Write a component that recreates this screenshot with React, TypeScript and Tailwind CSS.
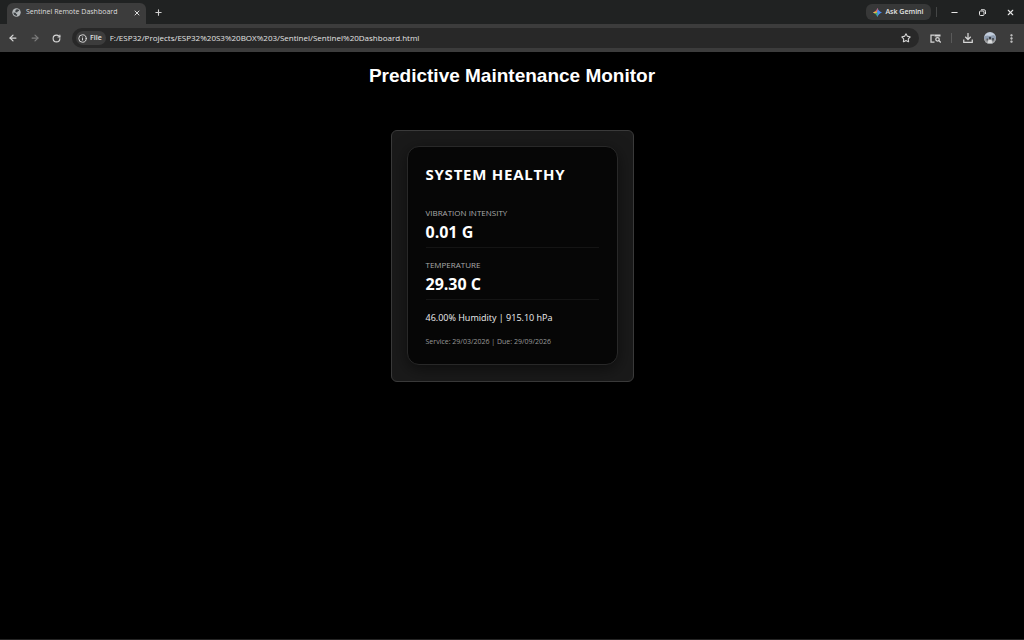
import React from "react";
import { ArrowLeft, ArrowRight, EllipsisVertical, Info, Minus, Plus, RotateCw, Star, X } from "lucide-react";

const readings = [
  { label: "VIBRATION INTENSITY", value: "0.01 G" },
  { label: "TEMPERATURE", value: "29.30 C" },
];

const GlobeIcon = () => (
  <svg viewBox="0 0 16 16" className="w-[9px] h-[9px] shrink-0" aria-hidden="true">
    <circle cx="8" cy="8" r="7.5" fill="#b4b8ba" />
    <path d="M2.500 8l4 .5 1 2 2 1-1 2.500C5 14 2 11.500 2.500 8zM7 2.500l4-.5 2 3-3 1-1 2-3-1 0-2z" fill="#3c4043" />
  </svg>
);

const GeminiIcon = () => (
  <svg viewBox="0 0 16 16" className="w-[9px] h-[9px] shrink-0" aria-hidden="true">
    <defs>
      <clipPath id="spark">
        <path d="M8 0c1.200 4 4 6.800 8 8-4 1.200-6.800 4-8 8-1.200-4-4-6.800-8-8 4-1.200 6.800-4 8-8z" />
      </clipPath>
    </defs>
    <g clipPath="url(#spark)">
      <rect width="16" height="16" fill="#4a8bf5" />
      <path d="M0 0h9L7 7 3 8H0z" fill="#ea5548" />
      <path d="M0 7l7-1v4H0z" fill="#f3bd3c" />
      <path d="M3 9l5-1v8H3z" fill="#45a967" />
    </g>
  </svg>
);

const RestoreIcon = () => (
  <svg viewBox="0 0 14 14" className="w-[7px] h-[7px]" fill="none" stroke="currentColor" strokeWidth="2" aria-hidden="true">
    <rect x="1" y="4" width="9" height="9" rx="2" />
    <path d="M4 1.500h6a3 3 0 0 1 3 3V10" />
  </svg>
);

const SidePanelSearchIcon = () => (
  <svg viewBox="0 0 22 18" className="w-[11px] h-[9px]" fill="none" stroke="currentColor" strokeWidth="2.500" aria-hidden="true">
    <path d="M9 16H2V2h7" />
    <path d="M9 3h12" strokeWidth="4" />
    <circle cx="15" cy="10.500" r="3.500" />
    <path d="M17.500 13l4 4" />
  </svg>
);

const DownloadIcon = () => (
  <svg viewBox="0 0 20 20" className="w-2.5 h-2.5" fill="none" stroke="currentColor" strokeWidth="2.500" aria-hidden="true">
    <path d="M10 0v13M4.500 7.500L10 13l5.500-5.500M1.500 13v5.500h17V13" />
  </svg>
);

const Avatar = () => (
  <svg viewBox="0 0 24 24" className="w-3 h-3" aria-hidden="true">
    <defs>
      <clipPath id="avatar">
        <circle cx="12" cy="12" r="12" />
      </clipPath>
    </defs>
    <g clipPath="url(#avatar)">
      <rect width="24" height="24" fill="#c2cddc" />
      <path d="M0 9l6-2 6 1 7-2 5 3v5H0z" fill="#8f9db0" />
      <path d="M0 14h24v10H0z" fill="#9b9c9e" />
      <path d="M5 13h3v4H5zM16 12h4v5h-4z" fill="#50565e" />
      <circle cx="12" cy="12" r="2.500" fill="#3b4048" />
      <path d="M7 22l2-6h6l2 6z" fill="#dadbdc" />
    </g>
  </svg>
);

const TabStrip = () => (
  <div className="flex h-6 items-center bg-[#202222]">
    <div className="ml-[7px] flex h-[21px] w-[139px] items-center gap-[5px] self-end rounded-t-md bg-[#3c3c3c] px-[5px] pb-0.5 text-[#dedede]">
      <GlobeIcon />
      <span className="flex-1 whitespace-nowrap text-[7px]">Sentinel Remote Dashboard</span>
      <button aria-label="Close tab"><X size={8} strokeWidth={3} /></button>
    </div>
    <button aria-label="New tab" className="ml-2 text-[#d0d0d0]"><Plus size={9} strokeWidth={3} /></button>
    <div className="flex-1" />
    <button className="flex h-4 w-[65px] items-center justify-center gap-[3px] whitespace-nowrap rounded-md bg-[#373838] text-[7px] font-semibold text-[#e6e6e6]">
      <GeminiIcon />
      Ask Gemini
    </button>
    <span className="ml-[5px] h-2.5 w-px bg-[#444646]" />
    <div className="flex text-[#e6e6e6]">
      <button aria-label="Minimize" className="ml-[3px] grid w-7 place-items-center"><Minus size={9} strokeWidth={3} /></button>
      <button aria-label="Restore" className="grid w-7 place-items-center"><RestoreIcon /></button>
      <button aria-label="Close" className="grid w-7 place-items-center"><X size={9} strokeWidth={3} /></button>
    </div>
  </div>
);

const Toolbar = () => (
  <div className="flex h-7 items-center bg-[#3c3c3c] text-[#d6d6d6]">
    <div className="flex items-center gap-3 pl-2">
      <button aria-label="Back"><ArrowLeft size={10} strokeWidth={3} /></button>
      <button aria-label="Forward" className="text-[#7c7c7c]"><ArrowRight size={10} strokeWidth={3} /></button>
      <button aria-label="Reload"><RotateCw size={9} strokeWidth={3} /></button>
    </div>
    <div className="ml-[11px] flex h-5 flex-1 items-center rounded-full bg-[#282828] pl-1 pr-2">
      <button className="flex h-3.5 items-center gap-[3px] rounded-full bg-[#3c3c3c] pl-0.5 pr-1 text-[7px] font-semibold text-[#e0e0e0]">
        <Info size={9} strokeWidth={2.5} />
        File
      </button>
      <input
        aria-label="Address"
        className="ml-1 min-w-0 flex-1 bg-transparent pb-px text-[8px] text-[#e3e3e3] outline-none"
        defaultValue="F:/ESP32/Projects/ESP32%20S3%20BOX%203/Sentinel/Sentinel%20Dashboard.html"
      />
      <button aria-label="Bookmark"><Star size={10} strokeWidth={2.5} /></button>
    </div>
    <div className="flex items-center pl-[11px] pr-[7px]">
      <button aria-label="Search side panel"><SidePanelSearchIcon /></button>
      <span className="ml-2.5 h-2.5 w-px bg-[#5a5a5a]" />
      <button aria-label="Downloads" className="ml-[11px]"><DownloadIcon /></button>
      <button aria-label="Profile" className="ml-[11px]"><Avatar /></button>
      <button aria-label="Menu" className="ml-2.5"><EllipsisVertical size={11} strokeWidth={3} /></button>
    </div>
  </div>
);

const StatusCard = () => (
  <section className="w-[243px] rounded-md border border-[#3a3a3a] bg-[#1a1a1a] px-[15px] pt-[15px] pb-4">
    <div className="rounded-xl border border-[#282828] bg-[#060606] px-[18px] py-4 shadow-[0_4px_16px_rgba(0,0,0,0.5)]">
      <h2 className="whitespace-nowrap text-[15px] font-bold leading-[22px] tracking-wider">SYSTEM HEALTHY</h2>
      <dl className="mt-4">
        {readings.map((reading) => (
          <div key={reading.label} className="mb-[5px] border-b border-[#141414] py-1">
            <dt className="text-[8px] leading-4 text-[#aaa]">{reading.label}</dt>
            <dd className="text-[16px] font-bold leading-[22px]">{reading.value}</dd>
          </div>
        ))}
      </dl>
      <p className="mt-2.5 text-[9px] leading-4 text-[#eee]">46.00% Humidity | 915.10 hPa</p>
      <p className="mt-2.5 text-[7px] leading-3 text-[#999]">Service: 29/03/2026 | Due: 29/09/2026</p>
    </div>
  </section>
);

const App = () => {
  return (
    <div className="flex min-h-screen flex-col border-b border-[#252525] bg-black font-['Open_Sans','Noto_Sans',sans-serif] text-white">
      <header>
        <TabStrip />
        <Toolbar />
      </header>
      <main className="flex flex-col items-center pt-3">
        <h1 className="font-['Liberation_Sans',Arial,sans-serif] text-[19px] font-bold leading-6">
          Predictive Maintenance Monitor
        </h1>
        <div className="mt-[42px]">
          <StatusCard />
        </div>
      </main>
    </div>
  );
};

export default App;
